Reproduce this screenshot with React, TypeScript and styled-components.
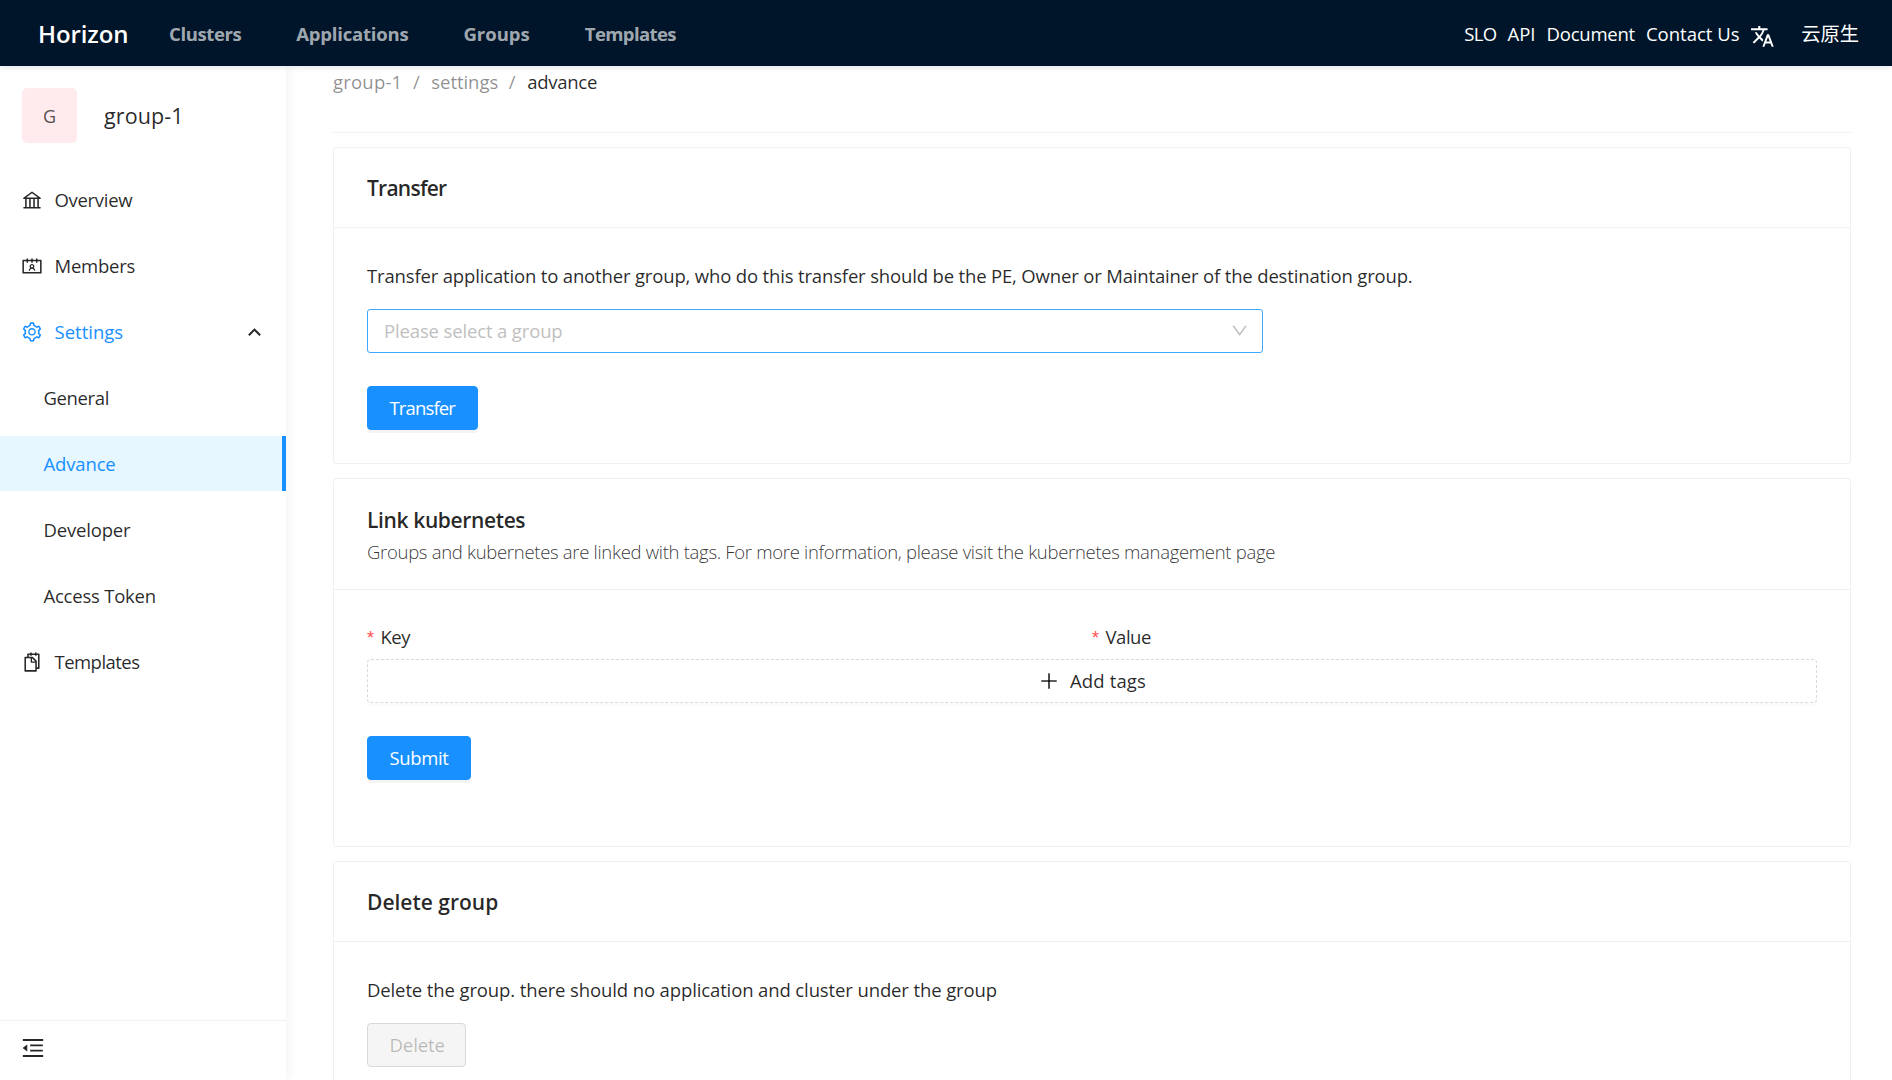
import React from 'react';
import styled, { createGlobalStyle } from 'styled-components';
import {
  AiOutlineBank,
  AiOutlineContacts,
  AiOutlineDown,
  AiOutlineMenuFold,
  AiOutlinePlus,
  AiOutlineSetting,
  AiOutlineSnippets,
} from 'react-icons/ai';
import { MdTranslate } from 'react-icons/md';

const colors = {
  primary: '#1890ff',
  text: 'rgba(0, 0, 0, 0.85)',
  muted: 'rgba(0, 0, 0, 0.45)',
  disabled: 'rgba(0, 0, 0, 0.25)',
  line: '#f0f0f0',
  header: '#001529',
};

const GlobalStyle = createGlobalStyle`
  *, *::before, *::after { box-sizing: border-box; }
  body {
    margin: 0;
    overflow: hidden;
    background: #fff;
    color: ${colors.text};
    font-family: "Open Sans", "Noto Sans", "Noto Sans CJK SC", sans-serif;
    font-size: 18.5px;
    line-height: 30px;
  }
`;

const Text = styled.span<{ $ls?: number }>`
  white-space: nowrap;
  letter-spacing: ${(p) => p.$ls ?? 0}px;
`;

const Page = styled.div`
  height: 1080px;
  display: flex;
  flex-direction: column;
  overflow: hidden;
`;

const Header = styled.header`
  flex: 0 0 66px;
  display: flex;
  align-items: center;
  padding: 2px 33px 0 38px;
  background: ${colors.header};
  color: #fff;
  box-shadow: 0 1px 6px rgba(0, 21, 41, 0.12);
  z-index: 2;
`;

const Brand = styled.div`
  flex: 0 0 131px;
  font-size: 24px;
  font-weight: 600;
`;

const Nav = styled.nav`
  flex: 1;
  display: flex;
  gap: 55px;
  font-weight: 700;
  color: rgba(255, 255, 255, 0.65);
`;

const HeaderLinks = styled.div`
  display: flex;
  align-items: center;
  gap: 11px;
  svg {
    margin: 5px 0 0 -1px;
  }
`;

const UserName = styled.span`
  margin-left: 16px;
  font-family: "Noto Sans CJK SC", sans-serif;
  font-size: 19.25px;
  line-height: 30px;
  position: relative;
  top: -1px;
`;

const Body = styled.div`
  flex: 1;
  display: flex;
  min-height: 0;
`;

const Sider = styled.aside`
  flex: 0 0 286px;
  display: flex;
  flex-direction: column;
  box-shadow: 3px 0 11px rgba(29, 35, 41, 0.05);
  z-index: 1;
`;

const GroupHead = styled.div`
  display: flex;
  align-items: center;
  gap: 27px;
  padding: 22px 22px 0;
  font-size: 21.5px;
`;

const Avatar = styled.span`
  width: 55px;
  height: 55px;
  display: flex;
  align-items: center;
  justify-content: center;
  border-radius: 5px;
  background: #ffebee;
  color: rgba(0, 0, 0, 0.7);
  font-size: 18px;
  padding-top: 1px;
`;

const Menu = styled.ul`
  flex: 1;
  margin: 29px 0 0;
  padding: 0;
  list-style: none;
  display: flex;
  flex-direction: column;
  gap: 11px;
`;

const MenuItem = styled.li<{ $sub?: boolean; $active?: boolean; $open?: boolean }>`
  height: 55px;
  display: flex;
  align-items: center;
  padding: 1px 22px 0 ${(p) => (p.$sub ? 43.5 : 20.5)}px;
  color: ${(p) => (p.$active || p.$open ? colors.primary : colors.text)};
  background: ${(p) => (p.$active ? '#e6f7ff' : 'transparent')};
  border-right: ${(p) => (p.$active ? `4px solid ${colors.primary}` : '0')};
  svg {
    flex: none;
    margin: -1px 12px 0 0;
  }
`;

const Caret = styled.span`
  width: 9px;
  height: 9px;
  margin: 4px 5.5px 0 auto;
  border: solid ${colors.text};
  border-width: 2px 0 0 2px;
  transform: rotate(45deg);
`;

const SiderFoot = styled.div`
  height: 60px;
  display: flex;
  align-items: center;
  padding: 0 20px 5px;
  border-top: 1px solid ${colors.line};
`;

const Main = styled.main`
  flex: 1;
  min-width: 0;
  padding: 0 41px 0 47px;
`;

const Breadcrumb = styled.div`
  height: 67px;
  padding-top: 1px;
  display: flex;
  color: ${colors.muted};
  border-bottom: 1px solid ${colors.line};
  b {
    font-weight: 400;
    color: ${colors.text};
  }
`;

const Slash = styled.span`
  width: 29px;
  padding-right: 1px;
  text-align: center;
`;

const Card = styled.section`
  margin-top: 14px;
  border: 1px solid ${colors.line};
  border-radius: 3px;
`;

const CardHead = styled.div<{ $h: number; $top?: number }>`
  height: ${(p) => p.$h}px;
  display: flex;
  flex-direction: column;
  justify-content: center;
  padding: ${(p) => p.$top ?? 0}px 33px 0;
  border-bottom: 1px solid ${colors.line};
`;

const Title = styled.h2`
  margin: 0;
  font-size: 21px;
  line-height: 34px;
  font-weight: 600;
`;

const SubTitle = styled.div`
  font-weight: 300;
  color: rgba(0, 0, 0, 0.8);
`;

const CardBody = styled.div<{ $bottom?: number }>`
  padding: 33px 33px ${(p) => p.$bottom ?? 33}px;
`;

const Select = styled.div`
  width: 896px;
  height: 44px;
  margin: 18px 0 33px;
  padding: 0 13px 0 16px;
  display: flex;
  align-items: center;
  justify-content: space-between;
  border: 1px solid #40a9ff;
  border-radius: 3px;
  color: #bfbfbf;
`;

const Button = styled.button<{ $w: number; $disabled?: boolean }>`
  width: ${(p) => p.$w}px;
  height: 44px;
  display: flex;
  align-items: center;
  padding: 0 0 0 21.5px;
  font: inherit;
  border-radius: 4px;
  border: 1px solid ${(p) => (p.$disabled ? '#d9d9d9' : colors.primary)};
  background: ${(p) => (p.$disabled ? '#f5f5f5' : colors.primary)};
  color: ${(p) => (p.$disabled ? colors.disabled : '#fff')};
  box-shadow: ${(p) => (p.$disabled ? 'none' : '0 3px 0 rgba(0, 0, 0, 0.045)')};
`;

const Labels = styled.div`
  display: grid;
  grid-template-columns: 1fr 1fr;
  height: 36px;
  line-height: 28px;
`;

const Star = styled.span`
  margin-right: 6.5px;
  font-family: "Liberation Sans", sans-serif;
  font-size: 18px;
  color: #ff4d4f;
`;

const AddButton = styled.button`
  width: 100%;
  height: 44px;
  margin-bottom: 33px;
  padding: 0;
  display: flex;
  align-items: center;
  justify-content: center;
  gap: 10px;
  font: inherit;
  color: ${colors.text};
  background: #fff;
  border: 1px dashed #d9d9d9;
  border-radius: 4px;
  box-shadow: 0 3px 0 rgba(0, 0, 0, 0.015);
`;

const DeleteRow = styled.div`
  margin-top: 18px;
`;

export default function App() {
  return (
    <Page>
      <GlobalStyle />
      <Header>
        <Brand><Text $ls={-0.09}>Horizon</Text></Brand>
        <Nav>
          <Text $ls={-0.38}>Clusters</Text>
          <Text $ls={-0.21}>Applications</Text>
          <Text>Groups</Text>
          <Text $ls={-0.6}>Templates</Text>
        </Nav>
        <HeaderLinks>
          <Text $ls={-0.6}>SLO</Text>
          <Text>API</Text>
          <Text $ls={-0.23}>Document</Text>
          <Text>Contact Us</Text>
          <MdTranslate size={24.75} />
          <UserName>云原生</UserName>
        </HeaderLinks>
      </Header>
      <Body>
        <Sider>
          <GroupHead>
            <Avatar>G</Avatar>
            <Text $ls={0.1}>group-1</Text>
          </GroupHead>
          <Menu>
            <MenuItem><AiOutlineBank size={22} /><Text $ls={-0.31}>Overview</Text></MenuItem>
            <MenuItem><AiOutlineContacts size={22} /><Text $ls={-0.24}>Members</Text></MenuItem>
            <MenuItem $open><AiOutlineSetting size={22} /><Text>Settings</Text><Caret /></MenuItem>
            <MenuItem $sub><Text $ls={-0.37}>General</Text></MenuItem>
            <MenuItem $sub $active><Text $ls={-0.15}>Advance</Text></MenuItem>
            <MenuItem $sub><Text $ls={-0.18}>Developer</Text></MenuItem>
            <MenuItem $sub><Text $ls={-0.22}>Access Token</Text></MenuItem>
            <MenuItem><AiOutlineSnippets size={22} /><Text $ls={-0.53}>Templates</Text></MenuItem>
          </Menu>
          <SiderFoot><AiOutlineMenuFold size={26} /></SiderFoot>
        </Sider>
        <Main>
          <Breadcrumb>
            <Text $ls={0.2}>group-1</Text>
            <Slash>/</Slash>
            <Text $ls={-0.06}>settings</Text>
            <Slash>/</Slash>
            <b><Text $ls={-0.25}>advance</Text></b>
          </Breadcrumb>
          <Card>
            <CardHead $h={80}><Title><Text $ls={-0.75}>Transfer</Text></Title></CardHead>
            <CardBody>
              <div><Text $ls={-0.16}>Transfer application to another group, who do this transfer should be the PE, Owner or Maintainer of the destination group.</Text></div>
              <Select><Text $ls={-0.14}>Please select a group</Text><AiOutlineDown size={19.25} /></Select>
              <Button $w={111}><Text $ls={-0.85}>Transfer</Text></Button>
            </CardBody>
          </Card>
          <Card>
            <CardHead $h={111} $top={2}>
              <Title><Text $ls={-0.37}>Link kubernetes</Text></Title>
              <SubTitle><Text $ls={-0.3}>Groups and kubernetes are linked with tags. For more information, please visit the kubernetes management page</Text></SubTitle>
            </CardHead>
            <CardBody $bottom={66}>
              <Labels>
                <div><Star>*</Star><Text $ls={-0.5}>Key</Text></div>
                <div><Star>*</Star><Text $ls={-0.46}>Value</Text></div>
              </Labels>
              <AddButton><AiOutlinePlus size={22} /><Text $ls={0.15}>Add tags</Text></AddButton>
              <Button $w={104}><Text $ls={-0.35}>Submit</Text></Button>
            </CardBody>
          </Card>
          <Card>
            <CardHead $h={80}><Title><Text>Delete group</Text></Title></CardHead>
            <CardBody>
              <div><Text $ls={-0.12}>Delete the group. there should no application and cluster under the group</Text></div>
              <DeleteRow><Button $w={99} $disabled disabled><Text $ls={-0.09}>Delete</Text></Button></DeleteRow>
            </CardBody>
          </Card>
        </Main>
      </Body>
    </Page>
  );
}
